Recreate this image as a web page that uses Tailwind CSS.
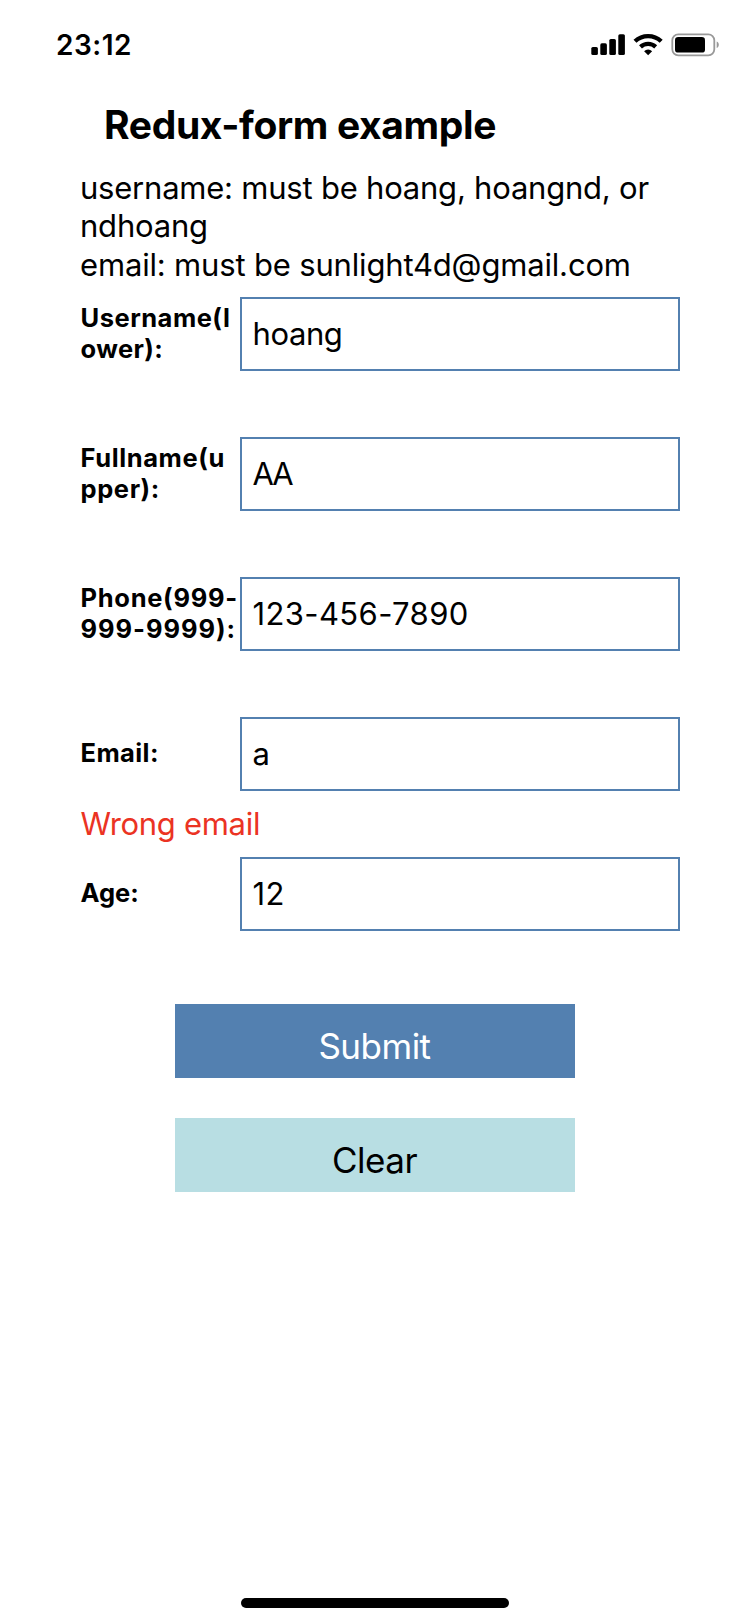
<!DOCTYPE html>
<html lang="en"><head><meta charset="utf-8"><title>Redux-form example</title>
<script src="https://cdn.jsdelivr.net/npm/@tailwindcss/browser@4"></script></head>
<body class="bg-white text-black font-['Inter',sans-serif]">
<main class="w-[750px] h-[1624px] flex flex-col overflow-hidden">
<header class="h-[101px] shrink-0 flex items-start justify-between pl-[56px] pr-[30px]">
<span class="mt-[25px] leading-[40px] text-[28px] font-semibold tracking-[0.5px]">23:12</span>
<svg class="mt-[30px] w-[130px] h-[30px]" viewBox="590 30 130 30"><rect x="591.3" y="47" width="6.6" height="8" rx="1.6"/><rect x="600.3" y="43.3" width="6.6" height="11.7" rx="1.6"/><rect x="609.3" y="39" width="6.6" height="16" rx="1.6"/><rect x="618.3" y="34.2" width="6.6" height="20.8" rx="1.6"/>
<g fill="none" stroke="#000" stroke-width="4.3"><path d="M635 41.3a19 19 0 0 1 26.2 0"/><path d="M640.5 46.9a11.3 11.3 0 0 1 15.2 0"/></g><path d="M648.1 55.2l-4-4a5.8 5.8 0 0 1 8 0z"/>
<rect x="672.3" y="34.3" width="42" height="21" rx="6" fill="none" stroke="#999" stroke-width="1.8"/><rect x="675" y="37" width="30" height="15.6" rx="3.2"/><path d="M716.7 41.5c2.8 1 2.8 5.5 0 6.5z" fill="#999"/></svg>
</header>
<h1 class="ml-[104px] leading-[48px] text-[39px] font-bold tracking-[-0.35px]">Redux-form example</h1>
<section class="ml-[80px] mt-[19.5px] h-[128.5px] flex flex-col text-[31px] leading-[38.5px] whitespace-nowrap"><p class="tracking-[-0.22px]">username: must be hoang, hoangnd, or</p><p class="tracking-[-0.2px]">ndhoang</p><p class="tracking-[-0.17px]">email: must be sunlight4d@gmail.com</p></section>
<form class="mx-[70px] pl-[10px] flex flex-col text-[31px]">
<div class="h-[140px]"><div class="flex h-[74px] items-center"><div class="w-[160px] pl-[0.5px] pb-[2px] flex flex-col items-start text-[25.5px] leading-[31px] font-bold"><span class="tracking-[0.5px]">Username(l</span><span class="tracking-[0.4px]">ower):</span></div><div class="flex-1 h-[74px] border-2 border-[#5380b0] pl-[10.5px] flex items-center"><span class="tracking-[-0.4px]">hoang</span></div></div></div>
<div class="h-[140px]"><div class="flex h-[74px] items-center"><div class="w-[160px] pl-[0.5px] pb-[2px] flex flex-col items-start text-[25.5px] leading-[31px] font-bold"><span class="tracking-[0.6px]">Fullname(u</span><span class="tracking-[0.6px]">pper):</span></div><div class="flex-1 h-[74px] border-2 border-[#5380b0] pl-[10.5px] flex items-center"><span class="tracking-[-2px]">AA</span></div></div></div>
<div class="h-[140px]"><div class="flex h-[74px] items-center"><div class="w-[160px] pl-[0.5px] pb-[2px] flex flex-col items-start text-[25.5px] leading-[31px] font-bold whitespace-nowrap"><span class="tracking-[0.7px]">Phone(999-</span><span class="tracking-[0.95px]">999-9999):</span></div><div class="flex-1 h-[74px] border-2 border-[#5380b0] pl-[10.5px] flex items-center"><span class="tracking-[0.38px]">123-456-7890</span></div></div></div>
<div class="h-[140px]"><div class="flex h-[74px] items-center"><div class="w-[160px] pl-[0.5px] pb-[4px] text-[25.5px] leading-[31px] font-bold tracking-[0.4px]">Email:</div><div class="flex-1 h-[74px] border-2 border-[#5380b0] pl-[10.5px] flex items-center"><span>a</span></div></div><p class="h-[66px] pl-[0.5px] flex items-center text-[#eb3323] tracking-[-0.3px]">Wrong email</p></div>
<div class="h-[147px]"><div class="flex h-[74px] items-center"><div class="w-[160px] pl-[0.5px] pb-[4px] text-[25.5px] leading-[31px] font-bold">Age:</div><div class="flex-1 h-[74px] border-2 border-[#5380b0] pl-[10.5px] flex items-center"><span class="tracking-[0.4px]">12</span></div></div></div>
</form>
<div class="w-[400px] mx-auto flex flex-col gap-[40px] text-[35px] tracking-[-0.5px]"><button class="h-[74px] bg-[#5380b0] text-white pt-[10px] pr-[1px] flex items-center justify-center">Submit</button><button class="h-[74px] bg-[#b8dee3] pt-[10px] pr-[1px] flex items-center justify-center">Clear</button></div>
<div class="mt-auto mb-[16px] mx-auto w-[268px] h-[10px] rounded-full bg-black"></div>
</main>
</body></html>
